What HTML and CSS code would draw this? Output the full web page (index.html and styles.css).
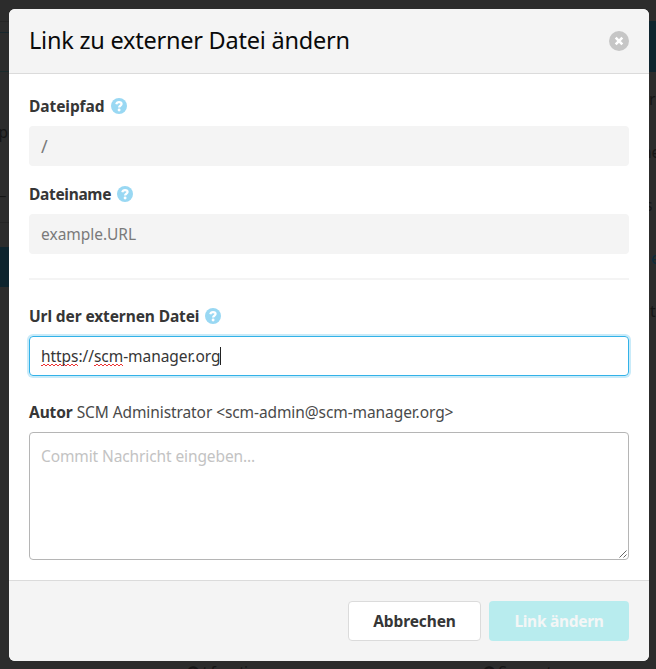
FILE: index.html
```
<!DOCTYPE html>
<html lang="de">
<head>
<meta charset="utf-8">
<title>Link zu externer Datei ändern</title>
<link rel="stylesheet" href="styles.css">
</head>
<body>
<svg width="0" height="0" class="defs">
  <symbol id="help" viewBox="0 0 16 16">
    <circle cx="8" cy="8" r="8" fill="#99d8f3"/>
    <path d="M5.3 6.2C5.6 4.7 6.6 4.1 8 4.1c1.6 0 2.6.8 2.6 2 0 1.7-2.5 1.6-2.5 3.3" fill="none" stroke="#fff" stroke-width="2.2"/>
    <circle cx="8.1" cy="12" r="1.45" fill="#fff"/>
  </symbol>
</svg>
<div class="page">
  <i class="line l1"></i><i class="line l2"></i><i class="line l3"></i><i class="line l4"></i>
  <i class="block left"></i><i class="block right"></i>
  <span class="bit b1">mp</span><span class="bit b2">_</span>
  <span class="bit b3">r</span><span class="bit b4">ne</span><span class="bit b5">s</span><span class="bit b6">e</span><span class="bit b7">t</span>
  <span class="bit b8">❶ t functions</span><span class="bit b9">❶ Support</span>
</div>
<main class="modal">
  <header class="head">
    <h1 class="title">Link zu externer Datei ändern</h1>
    <svg class="close" viewBox="0 0 20 20"><circle cx="10" cy="10" r="10" fill="#c6c6c6"/><path d="M6.7 6.7l6.6 6.6M13.3 6.7l-6.6 6.6" stroke="#fff" stroke-width="2.6"/></svg>
  </header>
  <section class="body">
    <div class="label"><b class="t-path">Dateipfad</b><svg class="help"><use href="#help"/></svg></div>
    <div class="input disabled"><span class="t-slash">/</span></div>
    <div class="label second"><b class="t-name">Dateiname</b><svg class="help"><use href="#help"/></svg></div>
    <div class="input disabled"><span class="t-example">example.URL</span></div>
    <hr>
    <div class="label"><b class="t-url">Url der externen Datei</b><svg class="help"><use href="#help"/></svg></div>
    <div class="input focus"><span class="t-value"><span class="spell">https</span>://<span class="spell">scm</span>-manager.org</span><i class="caret"></i></div>
    <div class="label author"><b class="t-autor">Autor</b><span class="t-mail">SCM Administrator &lt;scm-admin@scm-manager.org&gt;</span></div>
    <div class="area"><span class="t-commit">Commit Nachricht eingeben...</span>
      <svg class="grip" viewBox="0 0 8 8"><path d="M.5 7.5l7-7M4.5 7.5l3-3" stroke="#555" stroke-width=".9"/></svg>
    </div>
  </section>
  <footer class="foot">
    <div class="btn cancel"><span class="t-cancel">Abbrechen</span></div>
    <div class="btn submit"><span class="t-submit">Link ändern</span></div>
  </footer>
</main>
</body>
</html>
```
FILE: styles.css
```
* { box-sizing: border-box; }
body { margin: 0; width: 656px; height: 669px; overflow: hidden; position: relative; padding: 9px 7px 8px 9px; background: #2c2c2c; font: 15.5px/24px "Noto Sans", sans-serif; color: #363636; }
.defs { position: absolute; }
.page { position: absolute; inset: 0; overflow: hidden; }
.line { position: absolute; left: 0; width: 9px; height: 1px; background: #252525; }
.l1 { top: 21px; } .l2 { top: 32px; background: #17272d; } .l3 { top: 71px; background: #1b2a2b; } .l4 { top: 222px; }
.block { position: absolute; background: #0e242e; }
.left { left: 0; top: 247px; width: 9px; height: 40px; }
.right { left: 649px; top: 21px; width: 7px; height: 51px; }
.bit { position: absolute; color: #151515; white-space: nowrap; }
.b1 { left: -16px; top: 120px; } .b2 { left: -1px; top: 177px; }
.b3 { left: 649px; top: 87px; } .b4 { left: 642px; top: 140px; } .b5 { left: 645px; top: 193px; }
.b6 { left: 651px; top: 246px; color: #0c2b3b; } .b7 { left: 650px; top: 299px; }
.b8 { left: 186px; top: 660px; letter-spacing: -.8px; } .b9 { left: 482px; top: 660px; letter-spacing: -.8px; }
.modal { position: relative; width: 640px; height: 652px; border-radius: 6px; overflow: hidden; background: #fff; display: flex; flex-direction: column; }
.head { height: 65px; padding: 0 20px; background: #f4f4f4; border-bottom: 1px solid #dbdbdb; display: flex; align-items: center; justify-content: space-between; }
.title { margin: 0; padding-bottom: 2px; font-size: 23.5px; line-height: 24px; font-weight: 400; letter-spacing: -.23px; color: #0a0a0a; white-space: nowrap; }
.close { width: 20px; height: 20px; }
.body { flex: 1; padding: 20px; }
.label { height: 24px; margin-bottom: 8px; display: flex; align-items: center; white-space: nowrap; }
.label.second { margin-top: 16px; }
.label b { font-weight: 700; }
.t-path { letter-spacing: -.07px; }
.t-name { letter-spacing: -.32px; }
.t-url { letter-spacing: -.11px; }
.t-autor { letter-spacing: -.1px; }
.t-value { letter-spacing: -.06px; }
.t-mail { letter-spacing: -.09px; }
.t-commit { letter-spacing: -.11px; }
.t-cancel { letter-spacing: -.1px; }
.t-submit { letter-spacing: -.3px; }
.t-slash { font-size: 18px; }
.help { width: 16px; height: 16px; margin-left: 6px; }
.input { height: 40px; border-radius: 4px; padding: 0 11px; border: 1px solid transparent; display: flex; align-items: center; white-space: nowrap; }
.disabled { background: #f4f4f4; color: #7a7a7a; }
hr { height: 2px; margin: 24px 0; border: 0; background: #f4f4f4; }
.focus { border-color: #33b2e8; box-shadow: 0 0 0 2px #c9ebf9; }
.spell { background: linear-gradient(90deg, #e33 2px, transparent 2px) 0 calc(100% - 1px) / 4px 1px repeat-x, linear-gradient(90deg, transparent 2px, #e33 2px) 0 calc(100% - 2px) / 4px 1px repeat-x; }
.caret { width: 1px; height: 18px; background: #222; }
.author { margin-top: 24px; color: #4a4a4a; }
.author b { color: #363636; margin-right: 4px; }
.area { position: relative; height: 128px; border: 1px solid #b5b5b5; border-radius: 4px; padding: 11px; color: #c3c3c3; }
.grip { position: absolute; right: 1px; bottom: 1px; width: 8px; height: 8px; }
.foot { height: 81px; border-top: 1px solid #dbdbdb; background: #f4f4f4; padding: 20px; display: flex; justify-content: flex-end; gap: 8px; }
.btn { height: 40px; border-radius: 4px; font-weight: 700; display: flex; align-items: center; justify-content: center; white-space: nowrap; }
.cancel { width: 133px; background: #fff; border: 1px solid #dbdbdb; }
.submit { width: 140px; background: #b8ecee; color: #f4f6f6; }
```
